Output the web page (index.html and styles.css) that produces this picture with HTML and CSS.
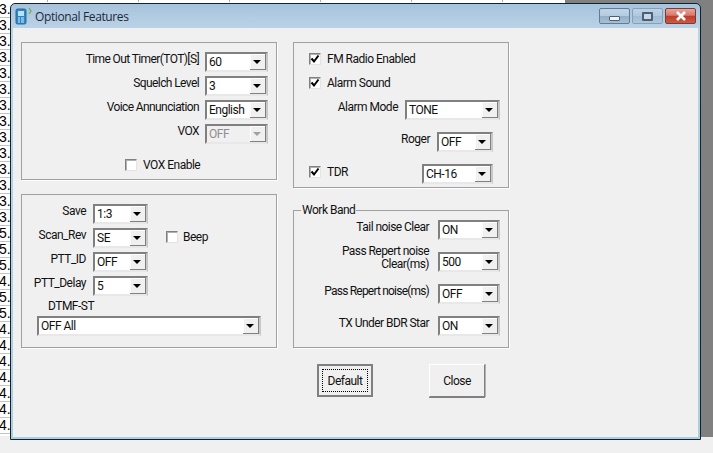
FILE: index.html
```html
<!DOCTYPE html>
<html lang="en">
<head>
<meta charset="utf-8">
<title>Optional Features</title>
<link rel="stylesheet" href="styles.css">
</head>
<body>
<div class="desktop">
  <div class="backdrop"></div>
  <div class="sheet">
    <div class="ruler"></div>
    <div class="cell">3.1</div><div class="cell">3.1</div><div class="cell">3.1</div><div class="cell">3.1</div>
    <div class="cell">3.2</div><div class="cell">3.2</div><div class="cell">3.2</div><div class="cell">3.2</div>
    <div class="cell">3.1</div><div class="cell">3.1</div><div class="cell">3.1</div><div class="cell">3.1</div>
    <div class="cell">3.4</div><div class="cell">3.4</div><div class="cell">5.6</div><div class="cell">5.1</div>
    <div class="cell">5.4</div><div class="cell">4.5</div><div class="cell">5.1</div><div class="cell">5.4</div>
    <div class="cell">4.5</div><div class="cell">4.2</div><div class="cell">4.2</div><div class="cell">4.1</div>
    <div class="cell">4.1</div><div class="cell">4.4</div><div class="cell">4.4</div>
  </div>

  <div class="window">
    <div class="titlebar">
      <svg class="app-icon" width="18" height="18" viewBox="0 0 18 18">
        <rect x="1" y="2" width="10" height="15" rx="1.5" fill="#2f86c4" stroke="#2a6c9e"/>
        <rect x="3" y="4" width="6" height="5" fill="#b9e4f7"/>
        <path d="M3 11h2M6 11h3M3 13h2M6 13h3M3 15h2M6 15h3" stroke="#d5eefb" stroke-width="1"/>
        <path d="M14 1l2 3-2 3" fill="none" stroke="#6fae4a" stroke-width="1.2"/>
      </svg>
      <span class="title">Optional Features</span>
      <div class="caption-buttons">
        <div class="cap cap-min"><span class="glyph-min"></span></div>
        <div class="cap cap-max"><span class="glyph-max"></span></div>
        <div class="cap cap-close">
          <svg width="12" height="10" viewBox="0 0 12 10"><path d="M2 1l8 8M10 1l-8 8" stroke="#fff" stroke-width="2.6"/></svg>
        </div>
      </div>
    </div>

    <div class="client">
      <div class="columns">
        <div class="column column-left">
          <section class="panel panel-timer">
            <div class="field">
              <span class="label label-timer">Time Out Timer(TOT)[S]</span>
              <div class="combo w63"><span class="value">60</span><span class="arrow"></span></div>
            </div>
            <div class="field">
              <span class="label label-timer">Squelch Level</span>
              <div class="combo w63"><span class="value">3</span><span class="arrow"></span></div>
            </div>
            <div class="field">
              <span class="label label-timer">Voice Annunciation</span>
              <div class="combo w63"><span class="value">English</span><span class="arrow"></span></div>
            </div>
            <div class="field">
              <span class="label label-timer">VOX</span>
              <div class="combo w63 disabled"><span class="value">OFF</span><span class="arrow"></span></div>
            </div>
            <div class="check check-vox"><span class="box"></span><span>VOX Enable</span></div>
          </section>

          <section class="panel panel-save">
            <div class="field">
              <span class="label label-save">Save</span>
              <div class="combo w55"><span class="value">1:3</span><span class="arrow"></span></div>
            </div>
            <div class="field">
              <span class="label label-save">Scan_Rev</span>
              <div class="combo w55"><span class="value">SE</span><span class="arrow"></span></div>
              <div class="check check-beep"><span class="box"></span><span>Beep</span></div>
            </div>
            <div class="field">
              <span class="label label-save">PTT_ID</span>
              <div class="combo w55"><span class="value">OFF</span><span class="arrow"></span></div>
            </div>
            <div class="field">
              <span class="label label-save">PTT_Delay</span>
              <div class="combo w55"><span class="value">5</span><span class="arrow"></span></div>
            </div>
            <div class="dtmf-label">DTMF-ST</div>
            <div class="combo w224"><span class="value">OFF All</span><span class="arrow"></span></div>
          </section>
        </div>

        <div class="column column-right">
          <section class="panel panel-radio">
            <div class="check"><span class="box"><svg width="10" height="10" viewBox="0 0 10 10"><path d="M1.5 4.5l2.5 3 4.5-6" fill="none" stroke="#000" stroke-width="2"/></svg></span><span>FM Radio Enabled</span></div>
            <div class="check check-alarm"><span class="box"><svg width="10" height="10" viewBox="0 0 10 10"><path d="M1.5 4.5l2.5 3 4.5-6" fill="none" stroke="#000" stroke-width="2"/></svg></span><span>Alarm Sound</span></div>
            <div class="field field-alarm">
              <span class="label">Alarm Mode</span>
              <div class="combo w95"><span class="value">TONE</span><span class="arrow"></span></div>
            </div>
            <div class="field field-roger">
              <span class="label">Roger</span>
              <div class="combo w56"><span class="value">OFF</span><span class="arrow"></span></div>
            </div>
            <div class="field field-tdr">
              <div class="check check-tdr"><span class="box"><svg width="10" height="10" viewBox="0 0 10 10"><path d="M1.5 4.5l2.5 3 4.5-6" fill="none" stroke="#000" stroke-width="2"/></svg></span><span>TDR</span></div>
              <div class="combo w71"><span class="value">CH-16</span><span class="arrow"></span></div>
            </div>
          </section>

          <section class="panel panel-band">
            <span class="legend">Work Band</span>
            <div class="field">
              <span class="label label-band">Tail noise Clear</span>
              <div class="combo w62"><span class="value">ON</span><span class="arrow"></span></div>
            </div>
            <div class="field">
              <span class="label label-band label-two">Pass Repert noise<br>Clear(ms)</span>
              <div class="combo w62"><span class="value">500</span><span class="arrow"></span></div>
            </div>
            <div class="field">
              <span class="label label-band label-long">Pass Repert noise(ms)</span>
              <div class="combo w62"><span class="value">OFF</span><span class="arrow"></span></div>
            </div>
            <div class="field">
              <span class="label label-band">TX Under BDR Star</span>
              <div class="combo w62"><span class="value">ON</span><span class="arrow"></span></div>
            </div>
          </section>
        </div>
      </div>

      <div class="actions">
        <button class="btn btn-default" type="button"><span class="focus">Default</span></button>
        <button class="btn" type="button">Close</button>
      </div>
    </div>
  </div>
</div>
</body>
</html>
```
FILE: styles.css
```css
* { box-sizing: border-box; }
html, body { margin: 0; padding: 0; }
body {
  width: 713px;
  height: 453px;
  overflow: hidden;
  font-family: Roboto, "Liberation Sans", sans-serif;
  font-size: 12px;
  letter-spacing: -0.5px;
  color: #111;
}
.desktop {
  position: relative;
  width: 713px;
  height: 453px;
  background: #f0f0f0;
  overflow: hidden;
}
.backdrop {
  position: absolute;
  left: 565px;
  top: 0;
  width: 148px;
  height: 437px;
  background: #808080;
}
.sheet {
  position: absolute;
  left: 0;
  top: 0;
  width: 565px;
  height: 436px;
  background: #fff;
}
.ruler {
  height: 2px;
  background: repeating-linear-gradient(90deg, #fff 0 47px, #b0b0b0 47px 48px, #fff 48px 91px);
}
.cell {
  height: 16px;
  border-bottom: 1px solid #c4c4c4;
  white-space: nowrap;
  font-family: "Liberation Sans", sans-serif;
  font-size: 14px;
  letter-spacing: 0;
  line-height: 15px;
  text-indent: -1px;
  color: #000;
}
.window {
  position: absolute;
  left: 10px;
  top: 3px;
  width: 691px;
  height: 437px;
  display: flex;
  flex-direction: column;
  padding: 0 2px 2px;
  background: linear-gradient(180deg, #a6c3dd 0, #bcd3e6 25px, #b8d6e6 26px, #a9cfe0 100%);
  border: 1px solid #14222e;
  border-radius: 5px 5px 0 0;
}
.titlebar {
  display: flex;
  align-items: center;
  height: 24px;
  flex: none;
}
.app-icon { flex: none; margin-left: 2px; }
.title {
  margin-left: 2px;
  font-family: "Open Sans", sans-serif;
  font-size: 12px;
  color: #1c2a38;
  letter-spacing: -0.38px;
}
.caption-buttons {
  margin-left: auto;
  margin-right: 2px;
  display: flex;
  gap: 2px;
}
.cap {
  width: 31px;
  height: 16px;
  border: 1px solid #5f7d98;
  border-radius: 2px;
  display: flex;
  align-items: center;
  justify-content: center;
  background: linear-gradient(180deg, #c1d4e6 0, #b4cbe0 50%, #93aec6 52%, #a6c0d6 100%);
}
.cap-max { background: linear-gradient(180deg, #bcd2e6 0, #afc8de 50%, #a0bbd3 52%, #aec8dd 100%); border-color: #86a0b8; }
.cap-close {
  border-color: #7b3c33;
  background: linear-gradient(180deg, #e8a59a 0, #d9786a 45%, #bf3d2a 52%, #c95b48 100%);
}
.glyph-min {
  display: block;
  width: 11px;
  height: 5px;
  margin-top: 5px;
  background: #eef3f8;
  border: 1px solid #4d5f70;
  border-radius: 1px;
}
.glyph-max {
  display: block;
  width: 11px;
  height: 9px;
  border: 2px solid #4d6073;
  border-radius: 1px;
  background: #c6d8e8;
}
.client {
  flex: 1;
  background: #f0f0f0;
  padding: 14px 8px 0;
}
.columns {
  display: flex;
  gap: 16px;
}
.column { display: flex; flex-direction: column; }
.column-left { width: 256px; gap: 14px; }
.column-right { width: 216px; gap: 22px; }
.panel {
  position: relative;
  border: 1px solid #a0a0a0;
  box-shadow: 1px 1px 0 #fff;
}
.panel-timer { padding: 9px 8px 8px 22px; }
.panel-save { padding: 9px 8px 11px 10px; }
.panel-radio { padding: 10px 8px 3px 15px; }
.panel-band { padding: 9px 8px 11px 8px; }

.field {
  display: flex;
  align-items: center;
  gap: 6px;
  height: 20px;
}
.panel-timer .field + .field { margin-top: 4px; }
.panel-save .field { gap: 7px; }
.panel-save .field + .field { margin-top: 4px; }
.panel-band .field { gap: 9px; }
.panel-band .field + .field { margin-top: 12px; }

.label {
  line-height: 13px;
  padding-bottom: 6px;
  text-align: right;
  white-space: nowrap;
}
.label-timer { width: 155px; letter-spacing: -0.6px; }
.label-save { width: 54px; flex: none; }
.label-band { width: 127px; flex: none; letter-spacing: -0.55px; }
.label-long { letter-spacing: -0.8px; }
.label-two { padding-bottom: 9px; }

.combo {
  flex: none;
  display: flex;
  height: 20px;
  border: 2px solid;
  border-color: #808080 #c8c8c8 #e8e8e8 #808080;
  background: #fff;
  align-items: stretch;
}
.w63 { width: 63px; }
.w55 { width: 55px; }
.w56 { width: 56px; }
.w62 { width: 62px; }
.w71 { width: 71px; }
.w95 { width: 95px; }
.w224 { width: 224px; margin-left: 5px; }
.value {
  flex: 1;
  min-width: 0;
  padding-left: 2px;
  line-height: 17px;
  overflow: hidden;
  white-space: nowrap;
}
.arrow {
  flex: none;
  position: relative;
  width: 16px;
  background: #f0f0f0;
  border-right: 1px solid #808080;
  border-bottom: 1px solid #808080;
  box-shadow: inset 1px 1px 0 #fff;
}
.arrow::after {
  content: "";
  position: absolute;
  left: 3px;
  top: 6px;
  border-style: solid;
  border-width: 4px 4px 0;
  border-color: #000 transparent transparent;
}
.disabled, .disabled .value { background: #f0f0f0; color: #8e8e8e; }
.disabled .arrow::after { border-top-color: #a0a0a0; }

.check {
  display: flex;
  align-items: center;
  gap: 6px;
  height: 12px;
  line-height: 12px;
  white-space: nowrap;
}
.box {
  flex: none;
  display: block;
  width: 12px;
  height: 12px;
  background: #fff;
  border: 1px solid;
  border-color: #808080 #e4e4e4 #e4e4e4 #808080;
  box-shadow: inset 1px 1px 0 #b0b0b0;
}
.box svg { display: block; }
.check-vox { margin: 15px 0 0 81px; }
.check-beep { margin-left: 11px; margin-top: -3px; gap: 5px; }
.check-alarm { margin-top: 12px; }
.check-tdr { margin-top: -4px; }

.dtmf-label {
  margin: 4px 0 3px 16px;
  line-height: 13px;
}

.field-alarm { justify-content: flex-end; margin-top: 11px; gap: 7px; }
.field-roger { justify-content: flex-end; margin-top: 12px; padding-right: 7px; gap: 7px; }
.field-tdr { justify-content: space-between; margin-top: 12px; padding-right: 7px; }

.legend {
  position: absolute;
  left: 7px;
  top: -8px;
  padding: 0 1px;
  background: #f0f0f0;
  line-height: 14px;
}

.actions {
  display: flex;
  gap: 56px;
  margin: 16px 0 0 296px;
}
.btn {
  width: 56px;
  height: 33px;
  padding: 0;
  font: inherit;
  letter-spacing: inherit;
  color: #111;
  background: #f0f0f0;
  border: 1px solid;
  border-color: #fff #808080 #808080 #fff;
  box-shadow: 0 1px 0 #808080, 1px 0 0 #b0b0b0;
}
.btn-default {
  display: flex;
  padding: 3px;
  border: 2px solid #808080;
  box-shadow: none;
}
.focus {
  flex: 1;
  display: flex;
  align-items: center;
  justify-content: center;
  border: 1px dotted #000;
}
```
